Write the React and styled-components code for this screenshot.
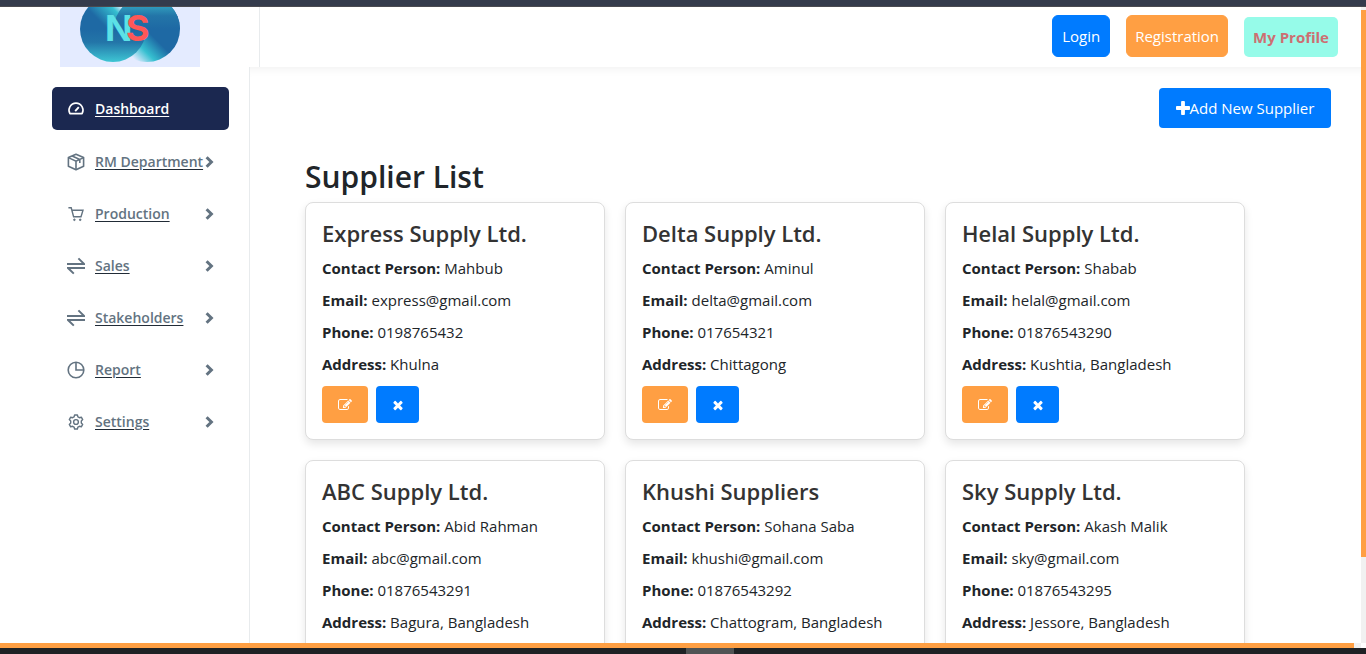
import React from "react";
import styled, { createGlobalStyle } from "styled-components";

const GlobalStyle = createGlobalStyle`
  *, *::before, *::after { box-sizing: border-box; }
  body {
    margin: 0;
    background: #fff;
    color: #212529;
    font-family: "Segoe UI", "Open Sans", "Noto Sans", sans-serif;
    font-size: 15px;
    line-height: 24px;
  }
  button { font: inherit; cursor: pointer; }
`;

const Screen = styled.div`
  display: flex;
  flex-direction: column;
  height: 100vh;
  overflow: hidden;
`;

const TopStrip = styled.div`
  flex: none;
  height: 7px;
  background: #343b4c;
  border-bottom: 1px solid #4a4a50;
`;

const Viewport = styled.div`
  flex: 1;
  min-height: 0;
  display: grid;
  grid-template-columns: minmax(0, 1fr) 5px;
`;

const Page = styled.div`
  overflow: hidden;
`;

const VerticalTrack = styled.div`
  background: #f1f1f1;
  padding-top: 3px;
`;

const VerticalThumb = styled.div`
  height: calc(100% - 86px);
  background: #ff9f43;
`;

const HorizontalTrack = styled.div`
  flex: none;
  display: flex;
  height: 5px;
  margin-right: 5px;
  padding-right: 7px;
  background: #f1f1f1;
`;

const HorizontalThumb = styled.div`
  flex: 1;
  background: #ff9f43;
`;

const Taskbar = styled.div`
  flex: none;
  display: flex;
  justify-content: center;
  height: 6px;
  padding-left: 54px;
  background: #1e2124;
`;

const TaskbarItem = styled.div`
  width: 48px;
  background: #505354;
`;

const Header = styled.header`
  position: relative;
  display: flex;
  height: 60px;
  background: #fff;
`;

const Brand = styled.a`
  flex: none;
  width: 260px;
  padding-left: 60px;
  border-right: 1px solid #e8ebed;

  svg { display: block; }
`;

const HeaderActions = styled.div`
  flex: 1;
  display: flex;
  justify-content: flex-end;
  align-items: flex-end;
  gap: 16px;
  padding: 0 23px 10px;
`;

const HeaderButton = styled.button`
  min-width: 58px;
  height: ${(p) => (p.$bold ? 40 : 42)}px;
  padding: 0 ${(p) => (p.$bold ? 9 : 8)}px;
  border: ${(p) => (p.$bold ? 0 : 1)}px solid ${(p) => p.$bg};
  border-radius: ${(p) => (p.$bold ? 5 : 6)}px;
  background: ${(p) => p.$bg};
  color: ${(p) => p.$fg || "#fff"};
  font-weight: ${(p) => (p.$bold ? 700 : 400)};
`;

const Columns = styled.div`
  display: flex;
`;

const Sidebar = styled.aside`
  flex: none;
  width: 250px;
  min-height: 600px;
  padding: 20px 20px 0 52px;
  border-right: 1px solid #e8ebed;
`;

const Menu = styled.nav`
  display: flex;
  flex-direction: column;
  gap: 10px;
`;

const MenuLink = styled.a`
  display: flex;
  align-items: center;
  height: ${(p) => (p.$active ? 43 : 42)}px;
  margin-bottom: ${(p) => (p.$active ? 1 : 0)}px;
  padding: 0 15px;
  border-radius: 5px;
  background: ${(p) => (p.$active ? "#1b2850" : "transparent")};
  color: ${(p) => (p.$active ? "#fff" : "#637381")};
  font-size: 14px;
  font-weight: 600;
  text-decoration: none;
`;

const MenuIcon = styled.svg`
  flex: none;
  width: 18px;
  height: 18px;
  margin-right: 10px;
  fill: none;
  stroke: currentColor;
  stroke-width: 1.6;
`;

const MenuText = styled.span`
  white-space: nowrap;
  text-decoration: underline;
  text-decoration-color: ${(p) => (p.$active ? "#fff" : "#212b36")};
  text-underline-offset: 2px;
`;

const Chevron = styled.svg`
  flex: none;
  width: 9px;
  height: 12px;
  margin-left: auto;
  fill: none;
  stroke: currentColor;
  stroke-width: 3;
`;

const Main = styled.main`
  flex: 1;
  min-width: 0;
  padding: 21px 30px 20px 55px;
  box-shadow: inset 0 12px 12px -12px rgba(0, 0, 0, 0.08);
`;

const Toolbar = styled.div`
  display: flex;
  justify-content: flex-end;
  margin-bottom: 30px;
`;

const AddButton = styled.button`
  display: flex;
  align-items: center;
  justify-content: center;
  min-width: 172px;
  height: 40px;
  padding: 0 15px;
  border: 0;
  border-radius: 4px;
  background: #007bff;
  color: #fff;
`;

const Glyph = styled.svg`
  display: block;
  width: ${(p) => p.$size}px;
  height: ${(p) => p.$size}px;
  fill: currentColor;
`;

const Title = styled.h1`
  margin: 0 0 6px;
  font-size: 30px;
  font-weight: 600;
  line-height: 38px;
`;

const CardGrid = styled.div`
  display: grid;
  grid-template-columns: repeat(auto-fill, 300px);
  gap: 20px;
`;

const Card = styled.article`
  padding: 16px;
  border: 1px solid #ddd;
  border-radius: 8px;
  background: #fff;
  box-shadow: 0 4px 8px rgba(0, 0, 0, 0.1);
`;

const CardTitle = styled.h2`
  margin: 0 0 8px;
  color: #333;
  font-size: 22px;
  font-weight: 600;
  line-height: 29px;
`;

const Details = styled.div`
  display: grid;
  gap: 8px;
`;

const Detail = styled.p`
  margin: 0;
  white-space: nowrap;
`;

const CardActions = styled.div`
  display: flex;
  gap: 8px;
  margin-top: 10px;
`;

const IconButton = styled.button`
  display: grid;
  place-items: center;
  width: ${(p) => p.$width}px;
  height: 37px;
  padding: 0;
  border: 0;
  border-radius: 4px;
  background: ${(p) => p.$bg};
  color: #fff;
`;

const PLUS =
  "M1600 736v192q0 40-28 68t-68 28h-416v416q0 40-28 68t-68 28h-192q-40 0-68-28t-28-68v-416h-416q-40 0-68-28t-28-68v-192q0-40 28-68t68-28h416v-416q0-40 28-68t68-28h192q40 0 68 28t28 68v416h416q40 0 68 28t28 68z";
const CROSS =
  "M1490 1322q0 40-28 68l-136 136q-28 28-68 28t-68-28l-294-294-294 294q-28 28-68 28t-68-28l-136-136q-28-28-28-68t28-68l294-294-294-294q-28-28-28-68t28-68l136-136q28-28 68-28t68 28l294 294 294-294q28-28 68-28t68 28l136 136q28 28 28 68t-28 68l-294 294 294 294q28 28 28 68z";
const PENCIL =
  "M888 1184l116-116-152-152-116 116v56h96v96h56zm440-720q-16-16-33 1l-350 350q-17 17-1 33t33-1l350-350q17-17 1-33zm80 594v190q0 119-84.5 203.5t-203.5 84.5h-832q-119 0-203.5-84.5t-84.5-203.5v-832q0-119 84.5-203.5t203.5-84.5h832q63 0 117 25 15 7 18 23 3 17-9 29l-49 49q-14 14-32 8-23-6-45-6h-832q-66 0-113 47t-47 113v832q0 66 47 113t113 47h832q66 0 113-47t47-113v-126q0-13 9-22l64-64q15-15 35-7t20 29zm-96-738l288 288-672 672h-288v-288zm444 132l-92 92-288-288 92-92q28-28 68-28t68 28l152 152q28 28 28 68t-28 68z";

const exchange = (
  <g strokeWidth="2">
    <path d="M0 7H17.2L11.4 1.4" />
    <path d="M18 11H1L6.8 16.6" />
  </g>
);

const menu = [
  {
    label: "Dashboard",
    active: true,
    icon: (
      <>
        <path d="M2.9 13.6A7 7 0 1 1 15.1 13.6Z" strokeLinejoin="round" />
        <path d="M8.2 11.2L11.8 7.2" strokeWidth="1.9" />
      </>
    ),
  },
  {
    label: "RM Department",
    icon: (
      <>
        <path d="M9 1.2L16.6 4.6V13.2L9 16.8L1.4 13.2V4.6Z" strokeLinejoin="round" />
        <path d="M1.4 4.6L9 8.2L16.6 4.6M9 8.2V16.8M5.2 2.9L12.8 6.4V10" />
      </>
    ),
  },
  {
    label: "Production",
    icon: (
      <>
        <path d="M1.4 2.8H4.2L6.6 11.8H14L16 5.2H5" strokeWidth="1.4" />
        <circle cx="7.4" cy="14.8" r=".8" strokeWidth="1" fill="currentColor" />
        <circle cx="13.2" cy="14.8" r=".8" strokeWidth="1" fill="currentColor" />
      </>
    ),
  },
  { label: "Sales", icon: exchange },
  { label: "Stakeholders", icon: exchange },
  {
    label: "Report",
    icon: (
      <>
        <circle cx="9" cy="9" r="7.8" />
        <path d="M9 1.2V9H16.8" />
      </>
    ),
  },
  {
    label: "Settings",
    icon: (
      <>
        <path
          d="M7.6 2H10.4L10.9 3.9L12.4 4.7L14.3 4.2L15.7 6.6L14.3 8V10L15.7 11.4L14.3 13.8L12.4 13.3L10.9 14.1L10.4 16H7.6L7.1 14.1L5.6 13.3L3.7 13.8L2.3 11.4L3.7 10V8L2.3 6.6L3.7 4.2L5.6 4.7L7.1 3.9Z"
          strokeWidth="1.4"
          strokeLinejoin="round"
        />
        <circle cx="9" cy="9" r="2.4" strokeWidth="1.4" />
      </>
    ),
  },
];

const suppliers = [
  ["Express Supply Ltd.", "Mahbub", "express@gmail.com", "0198765432", "Khulna"],
  ["Delta Supply Ltd.", "Aminul", "delta@gmail.com", "017654321", "Chittagong"],
  ["Helal Supply Ltd.", "Shabab", "helal@gmail.com", "01876543290", "Kushtia, Bangladesh"],
  ["ABC Supply Ltd.", "Abid Rahman", "abc@gmail.com", "01876543291", "Bagura, Bangladesh"],
  ["Khushi Suppliers", "Sohana Saba", "khushi@gmail.com", "01876543292", "Chattogram, Bangladesh"],
  ["Sky Supply Ltd.", "Akash Malik", "sky@gmail.com", "01876543295", "Jessore, Bangladesh"],
];

function Logo() {
  return (
    <svg width="140" height="60" viewBox="0 0 140 60" role="img" aria-label="NS">
      <defs>
        <linearGradient id="left" gradientUnits="userSpaceOnUse" x1="30" y1="20" x2="56" y2="-6">
          <stop offset="0" stopColor="#1e69a4" />
          <stop offset=".3" stopColor="#1e69a4" />
          <stop offset=".8" stopColor="#35bfd0" />
          <stop offset="1" stopColor="#e4ebff" />
        </linearGradient>
        <linearGradient id="right" gradientUnits="userSpaceOnUse" x1="110" y1="24" x2="78" y2="56">
          <stop offset="0" stopColor="#1e69a4" />
          <stop offset=".35" stopColor="#1e69a4" />
          <stop offset=".7" stopColor="#35bfd0" />
          <stop offset="1" stopColor="#e4ebff" />
        </linearGradient>
        <linearGradient id="low" x1="0" y1="0" x2="0" y2="1">
          <stop offset="0" stopColor="#1e69a4" />
          <stop offset=".4" stopColor="#2375a8" />
          <stop offset="1" stopColor="#3ec6d4" />
        </linearGradient>
        <linearGradient id="high" x1="0" y1="0" x2="0" y2="1">
          <stop offset="0" stopColor="#3ec6d4" />
          <stop offset=".6" stopColor="#2375a8" />
          <stop offset="1" stopColor="#1e69a4" />
        </linearGradient>
      </defs>
      <rect width="140" height="60" fill="#e4ebff" />
      <circle cx="87" cy="22" r="33" fill="url(#right)" />
      <path d="M20 22A33 33 0 0 1 86 22Z" fill="url(#left)" />
      <path d="M20 22A33 33 0 0 0 86 22Z" fill="url(#low)" />
      <path d="M54 22A33 33 0 0 1 120 22Z" fill="url(#high)" />
      <text x="45" y="34" fontFamily="Inter, sans-serif" fontWeight="700" fontSize="36" fill="#5ce1e6">N</text>
      <text x="66" y="34" fontFamily="Inter, sans-serif" fontWeight="700" fontSize="36" fill="#ff5757">S</text>
    </svg>
  );
}

function Icon({ path, size, viewBox = "0 0 1792 1792" }) {
  return (
    <Glyph $size={size} viewBox={viewBox} aria-hidden="true">
      <path d={path} />
    </Glyph>
  );
}

function SupplierCard({ data }) {
  const [name, contact, email, phone, address] = data;
  return (
    <Card>
      <CardTitle>{name}</CardTitle>
      <Details>
        <Detail><strong>Contact Person:</strong> {contact}</Detail>
        <Detail><strong>Email:</strong> {email}</Detail>
        <Detail><strong>Phone:</strong> {phone}</Detail>
        <Detail><strong>Address:</strong> {address}</Detail>
      </Details>
      <CardActions>
        <IconButton type="button" $width={46} $bg="#ff9f43" aria-label={`Edit ${name}`}>
          <Icon path={PENCIL} size={14} />
        </IconButton>
        <IconButton type="button" $width={43} $bg="#007bff" aria-label={`Delete ${name}`}>
          <Icon path={CROSS} size={14} />
        </IconButton>
      </CardActions>
    </Card>
  );
}

export default function App() {
  return (
    <Screen>
      <GlobalStyle />
      <TopStrip />
      <Viewport>
        <Page>
          <Header>
            <Brand href="#"><Logo /></Brand>
            <HeaderActions>
              <HeaderButton type="button" $bg="#007bff">Login</HeaderButton>
              <HeaderButton type="button" $bg="#ff9f43">Registration</HeaderButton>
              <HeaderButton type="button" $bg="#96fbe9" $fg="#cd6f72" $bold>My Profile</HeaderButton>
            </HeaderActions>
          </Header>
          <Columns>
            <Sidebar>
              <Menu>
                {menu.map((item) => (
                  <MenuLink key={item.label} href="#" $active={item.active}>
                    <MenuIcon viewBox="0 0 18 18" aria-hidden="true">{item.icon}</MenuIcon>
                    <MenuText $active={item.active}>{item.label}</MenuText>
                    {!item.active && (
                      <Chevron viewBox="0 0 9 12" aria-hidden="true">
                        <path d="M1.6 1.2L6.4 6L1.6 10.8" />
                      </Chevron>
                    )}
                  </MenuLink>
                ))}
              </Menu>
            </Sidebar>
            <Main>
              <Toolbar>
                <AddButton type="button">
                  <Icon path={PLUS} size={14} viewBox="192 128 1408 1408" />
                  Add New Supplier
                </AddButton>
              </Toolbar>
              <Title>Supplier List</Title>
              <CardGrid>
                {suppliers.map((s) => (
                  <SupplierCard key={s[0]} data={s} />
                ))}
              </CardGrid>
            </Main>
          </Columns>
        </Page>
        <VerticalTrack><VerticalThumb /></VerticalTrack>
      </Viewport>
      <HorizontalTrack><HorizontalThumb /></HorizontalTrack>
      <Taskbar><TaskbarItem /></Taskbar>
    </Screen>
  );
}
